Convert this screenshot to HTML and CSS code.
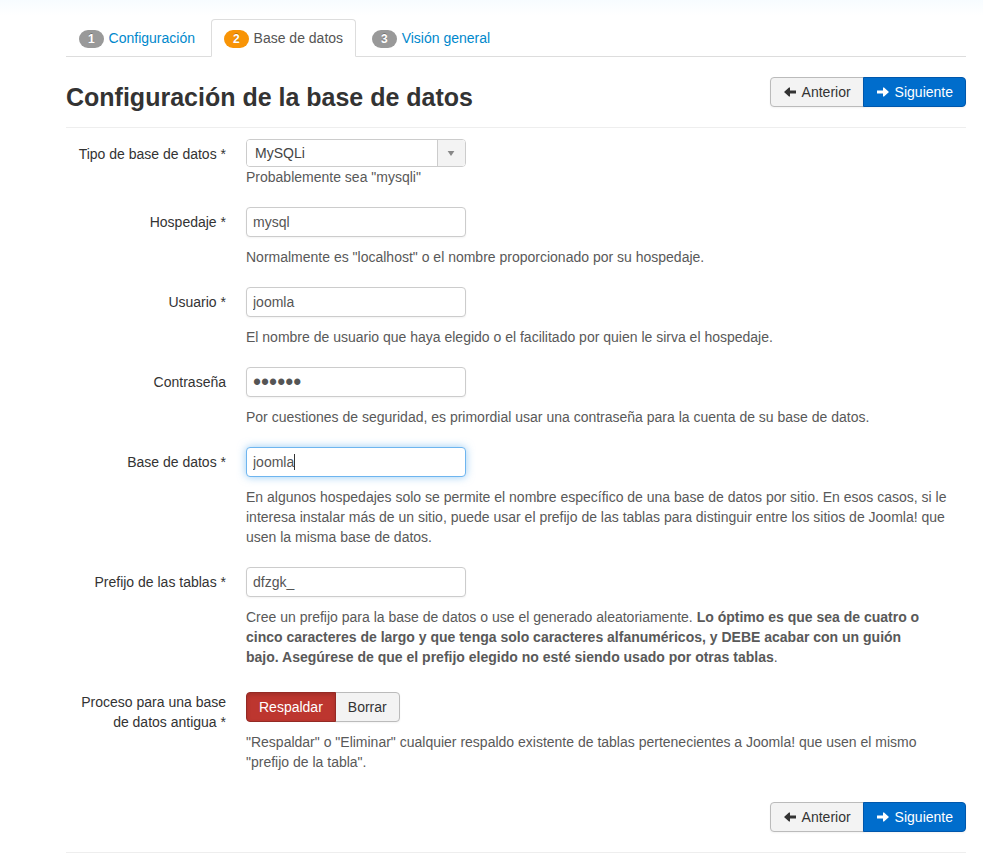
FILE: index.html
```html
<!DOCTYPE html>
<html lang="es">
<head>
<meta charset="utf-8">
<meta name="viewport" content="width=device-width, initial-scale=1">
<title>Configuración de la base de datos</title>
<link rel="stylesheet" href="styles.css">
</head>
<body>
<svg class="sprite" aria-hidden="true">
  <symbol id="arrow-left" viewBox="0 0 14 10"><path d="M1 5 6 0.500H7V3.500H13V6.500H7V9.500H6Z"/></symbol>
  <symbol id="arrow-right" viewBox="0 0 14 10"><path d="M13 5 8 0.500H7V3.500H1V6.500H7V9.500H8Z"/></symbol>
</svg>
<main class="container">
  <nav>
    <ul class="tabs">
      <li><a class="tab" href="#configuracion"><span class="badge">1</span> Configuración</a></li>
      <li><a class="tab tab-active" href="#base" aria-current="step"><span class="badge badge-active">2</span> Base de datos</a></li>
      <li><a class="tab" href="#general"><span class="badge">3</span> Visión general</a></li>
    </ul>
  </nav>
  <form class="form">
    <header class="header">
      <h1 class="title">Configuración de la base de datos</h1>
      <div class="btn-group">
        <button type="button" class="btn"><svg class="icon" aria-hidden="true"><use href="#arrow-left"/></svg>Anterior</button>
        <button type="button" class="btn btn-primary"><svg class="icon" aria-hidden="true"><use href="#arrow-right"/></svg>Siguiente</button>
      </div>
    </header>

    <div class="row">
      <label class="label" for="type">Tipo de base de datos *</label>
      <div class="controls">
        <div class="select">
          <select class="select-field" id="type"><option>MySQLi</option></select>
          <svg class="select-arrow" viewBox="0 0 28 26" aria-hidden="true"><path d="M10 11H17L13.500 16Z"/></svg>
        </div>
        <p class="help help-tight">Probablemente sea "mysqli"</p>
      </div>
    </div>

    <div class="row">
      <label class="label" for="host">Hospedaje *</label>
      <div class="controls">
        <input class="input" id="host" type="text" value="mysql">
        <p class="help">Normalmente es "localhost" o el nombre proporcionado por su hospedaje.</p>
      </div>
    </div>

    <div class="row">
      <label class="label" for="user">Usuario *</label>
      <div class="controls">
        <input class="input" id="user" type="text" value="joomla">
        <p class="help">El nombre de usuario que haya elegido o el facilitado por quien le sirva el hospedaje.</p>
      </div>
    </div>

    <div class="row">
      <label class="label" for="password">Contraseña</label>
      <div class="controls">
        <input class="input input-password" id="password" type="password" value="joomla">
        <p class="help">Por cuestiones de seguridad, es primordial usar una contraseña para la cuenta de su base de datos.</p>
      </div>
    </div>

    <div class="row">
      <label class="label" for="name">Base de datos *</label>
      <div class="controls">
        <div class="caret-field">
          <input class="input" id="name" type="text" value="joomla">
        </div>
        <p class="help">En algunos hospedajes solo se permite el nombre específico de una base de datos por sitio. En esos casos, si le interesa instalar más de un sitio, puede usar el prefijo de las tablas para distinguir entre los sitios de Joomla! que usen la misma base de datos.</p>
      </div>
    </div>

    <div class="row">
      <label class="label" for="prefix">Prefijo de las tablas *</label>
      <div class="controls">
        <input class="input" id="prefix" type="text" value="dfzgk_">
        <p class="help">Cree un prefijo para la base de datos o use el generado aleatoriamente. <strong>Lo óptimo es que sea de cuatro o cinco caracteres de largo y que tenga solo caracteres alfanuméricos, y DEBE acabar con un guión<br>bajo. Asegúrese de que el prefijo elegido no esté siendo usado por otras tablas</strong>.</p>
      </div>
    </div>

    <div class="row">
      <span class="label" id="old-label">Proceso para una base de datos antigua *</span>
      <div class="controls controls-choice">
        <div class="btn-group" role="radiogroup" aria-labelledby="old-label">
          <label class="btn btn-choice"><input class="radio" type="radio" name="old" checked>Respaldar</label>
          <label class="btn btn-choice"><input class="radio" type="radio" name="old">Borrar</label>
        </div>
        <p class="help">"Respaldar" o "Eliminar" cualquier respaldo existente de tablas pertenecientes a Joomla! que usen el mismo "prefijo de la tabla".</p>
      </div>
    </div>

    <footer class="footer">
      <div class="btn-group">
        <button type="button" class="btn"><svg class="icon" aria-hidden="true"><use href="#arrow-left"/></svg>Anterior</button>
        <button type="button" class="btn btn-primary"><svg class="icon" aria-hidden="true"><use href="#arrow-right"/></svg>Siguiente</button>
      </div>
    </footer>
  </form>
</main>
<script src="form.js"></script>
</body>
</html>
```
FILE: styles.css
```css
* {
  box-sizing: border-box;
}

body {
  margin: 0;
  background: #fff linear-gradient(#f7fcff, #fff) no-repeat 0 0 / 100% 16px;
  color: #333;
  font: 14px/20px "Liberation Sans", Arial, sans-serif;
}

.sprite {
  display: none;
}

.container {
  margin: 0 17px 0 66px;
  padding-top: 19px;
}

.tabs {
  display: flex;
  gap: 3px;
  margin: 0;
  padding: 0;
  border-bottom: 1px solid #ddd;
  list-style: none;
}

.tab {
  display: block;
  margin-bottom: -1px;
  padding: 8px 12px;
  border: 1px solid transparent;
  border-radius: 4px 4px 0 0;
  color: #08c;
  text-decoration: none;
}

.tab-active {
  border-color: #ddd #ddd #fff;
  background: #fff;
  color: #555;
}

.badge {
  margin-right: 1px;
  padding: 2px 9px;
  border-radius: 9px;
  background: #999;
  color: #fff;
  font-size: 12px;
  font-weight: bold;
  line-height: 14px;
  text-shadow: 0 -1px 0 rgba(0, 0, 0, .25);
}

.badge-active {
  background: #f89406;
}

.form {
  margin-top: 20px;
}

.header {
  display: flex;
  justify-content: space-between;
  align-items: flex-start;
  margin-bottom: 11px;
  padding-bottom: 10px;
  border-bottom: 1px solid #eee;
}

.title {
  margin: 0;
  font-size: 25px;
  line-height: 40px;
}

.btn-group {
  display: flex;
}

.btn {
  display: flex;
  align-items: center;
  position: relative;
  padding: 4px 12px;
  border: 1px solid #bbb;
  border-radius: 4px 0 0 4px;
  background: #f3f3f3;
  box-shadow: 0 1px 2px rgba(0, 0, 0, .05);
  color: #333;
  font: inherit;
  cursor: pointer;
}

.btn + .btn {
  margin-left: -1px;
  border-radius: 0 4px 4px 0;
}

.btn-primary {
  border-color: #0057ac;
  background: #006dcc;
  color: #fff;
}

.btn-choice:has(:checked) {
  z-index: 1;
  border-color: #942a25;
  background: #bd362f;
  box-shadow: inset 0 2px 4px rgba(0, 0, 0, .15);
  color: #fff;
}

.radio {
  position: absolute;
  opacity: 0;
}

.icon {
  width: 14px;
  height: 10px;
  margin-right: 5px;
  fill: currentColor;
}

.row {
  display: flex;
  gap: 20px;
  margin-bottom: 20px;
}

.label {
  flex: 0 0 160px;
  padding-top: 5px;
  text-align: right;
}

.controls {
  flex: 1;
  padding-right: 12px;
  color: #595959;
}

.controls-choice {
  padding-top: 5px;
}

.input {
  display: block;
  width: 220px;
  height: 30px;
  padding: 4px 6px;
  border: 1px solid #ccc;
  border-radius: 4px;
  outline: 0;
  background: #fff;
  box-shadow: 0 1px 2px rgba(0, 0, 0, .05);
  color: #555;
  font: inherit;
}

.input:focus {
  border-color: #6eb5ef;
  box-shadow: 0 0 8px rgba(82, 168, 236, .6);
}

.input-password {
  font-size: 23px;
}

.caret-field {
  position: relative;
  width: 220px;
}

.caret-field .input {
  caret-color: transparent;
}

.caret-field:focus-within::after {
  content: "";
  position: absolute;
  top: 7px;
  left: 48px;
  width: 1px;
  height: 16px;
  background: #333;
}

.select {
  display: grid;
  width: 220px;
  border: 1px solid #ccc;
  border-radius: 4px;
  overflow: hidden;
}

.select-field {
  grid-area: 1 / 1;
  height: 26px;
  padding: 0 36px 0 8px;
  border: 0;
  appearance: none;
  background: #fff;
  color: #444;
  font: inherit;
}

.select-arrow {
  grid-area: 1 / 1;
  justify-self: end;
  width: 28px;
  height: 26px;
  border-left: 1px solid #ccc;
  background: #f3f3f3;
  fill: #888;
  pointer-events: none;
}

.help {
  margin: 10px 0 0;
}

.help-tight {
  margin-top: 0;
}

.footer {
  display: flex;
  justify-content: flex-end;
  margin-top: 30px;
  padding-bottom: 20px;
  border-bottom: 1px solid #eee;
}
```
FILE: form.js
```js
const nameField = document.getElementById("name");
nameField.focus({ preventScroll: true });
nameField.setSelectionRange(nameField.value.length, nameField.value.length);
```
